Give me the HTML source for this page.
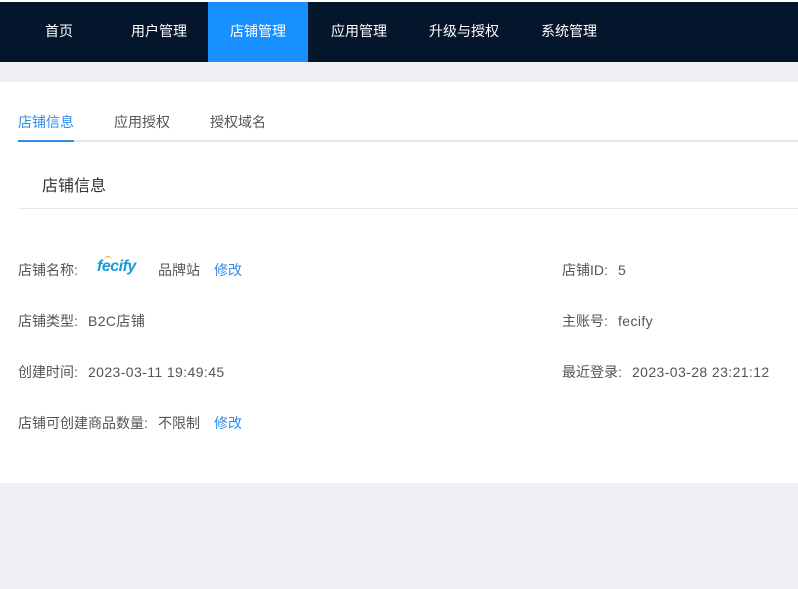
<!DOCTYPE html>
<html><head><meta charset="utf-8"><style>
*{margin:0;padding:0;box-sizing:border-box}
body{width:798px;height:589px;background:#f0f0f4;font-family:"Liberation Sans","Noto Sans CJK SC",sans-serif;font-size:14px;color:#555;position:relative;overflow:hidden}
.top{position:absolute;top:0;left:0;width:798px;height:2px;background:#fff}
.nav{position:absolute;top:2px;left:0;width:798px;height:60px;background:#04152c}
.nav div{position:absolute;top:0;height:60px;line-height:60px;color:#fff;font-size:14px;text-align:center}
.main{position:absolute;top:82px;left:0;width:798px;height:401px;background:#fff}
.abs{position:absolute;white-space:nowrap}
.blue{color:#2d8cf0}
.v{letter-spacing:0.4px;margin-top:2px}
</style></head><body>
<div class="top"></div>
<div class="nav">
<div style="left:44px;width:30px;top:-1px">首页</div>
<div style="left:130px;width:58px;top:-1px">用户管理</div>
<div style="left:208px;width:100px;background:#1890ff"><span style="position:relative;top:-1px">店铺管理</span></div>
<div style="left:330px;width:58px;top:-1px">应用管理</div>
<div style="left:428px;width:72px;top:-1px">升级与授权</div>
<div style="left:540px;width:58px;top:-1px">系统管理</div>
</div>
<div class="main">
<div class="abs" style="left:18px;top:30px;color:#2d8cf0">店铺信息</div>
<div class="abs" style="left:114px;top:30px">应用授权</div>
<div class="abs" style="left:210px;top:30px">授权域名</div>
<div class="abs" style="left:18px;top:58px;width:780px;height:2px;background:#e8e8e8"></div>
<div class="abs" style="left:18px;top:58px;width:56px;height:2px;background:#2d8cf0"></div>
<div class="abs" style="left:42px;top:90px;font-size:16px;color:#333">店铺信息</div>
<div class="abs" style="left:18px;top:126px;width:780px;height:1px;background:#e8e8e8"></div>

<div class="abs" style="left:18px;top:178px">店铺名称:</div>
<div class="abs" style="left:97px;top:176px;font-size:16px;font-weight:bold;font-style:italic;color:#1a9ad6;letter-spacing:-0.5px">fecify</div>
<div class="abs" style="left:104px;top:174px;width:8px;height:8px;border-top:1px solid #f0a040;border-radius:50%"></div>
<div class="abs" style="left:158px;top:178px">品牌站</div>
<div class="abs blue" style="left:214px;top:178px">修改</div>
<div class="abs" style="left:562px;top:178px">店铺ID:</div>
<div class="abs v" style="left:618px;top:178px">5</div>

<div class="abs" style="left:18px;top:229px">店铺类型:</div>
<div class="abs" style="left:88px;top:229px;letter-spacing:0.4px">B2C店铺</div>
<div class="abs" style="left:562px;top:229px">主账号:</div>
<div class="abs v" style="left:618px;top:229px">fecify</div>

<div class="abs" style="left:18px;top:280px">创建时间:</div>
<div class="abs v" style="left:88px;top:280px">2023-03-11 19:49:45</div>
<div class="abs" style="left:562px;top:280px">最近登录:</div>
<div class="abs v" style="left:632px;top:280px">2023-03-28 23:21:12</div>

<div class="abs" style="left:18px;top:331px">店铺可创建商品数量:</div>
<div class="abs" style="left:158px;top:331px">不限制</div>
<div class="abs blue" style="left:214px;top:331px">修改</div>
</div>
</body></html>
